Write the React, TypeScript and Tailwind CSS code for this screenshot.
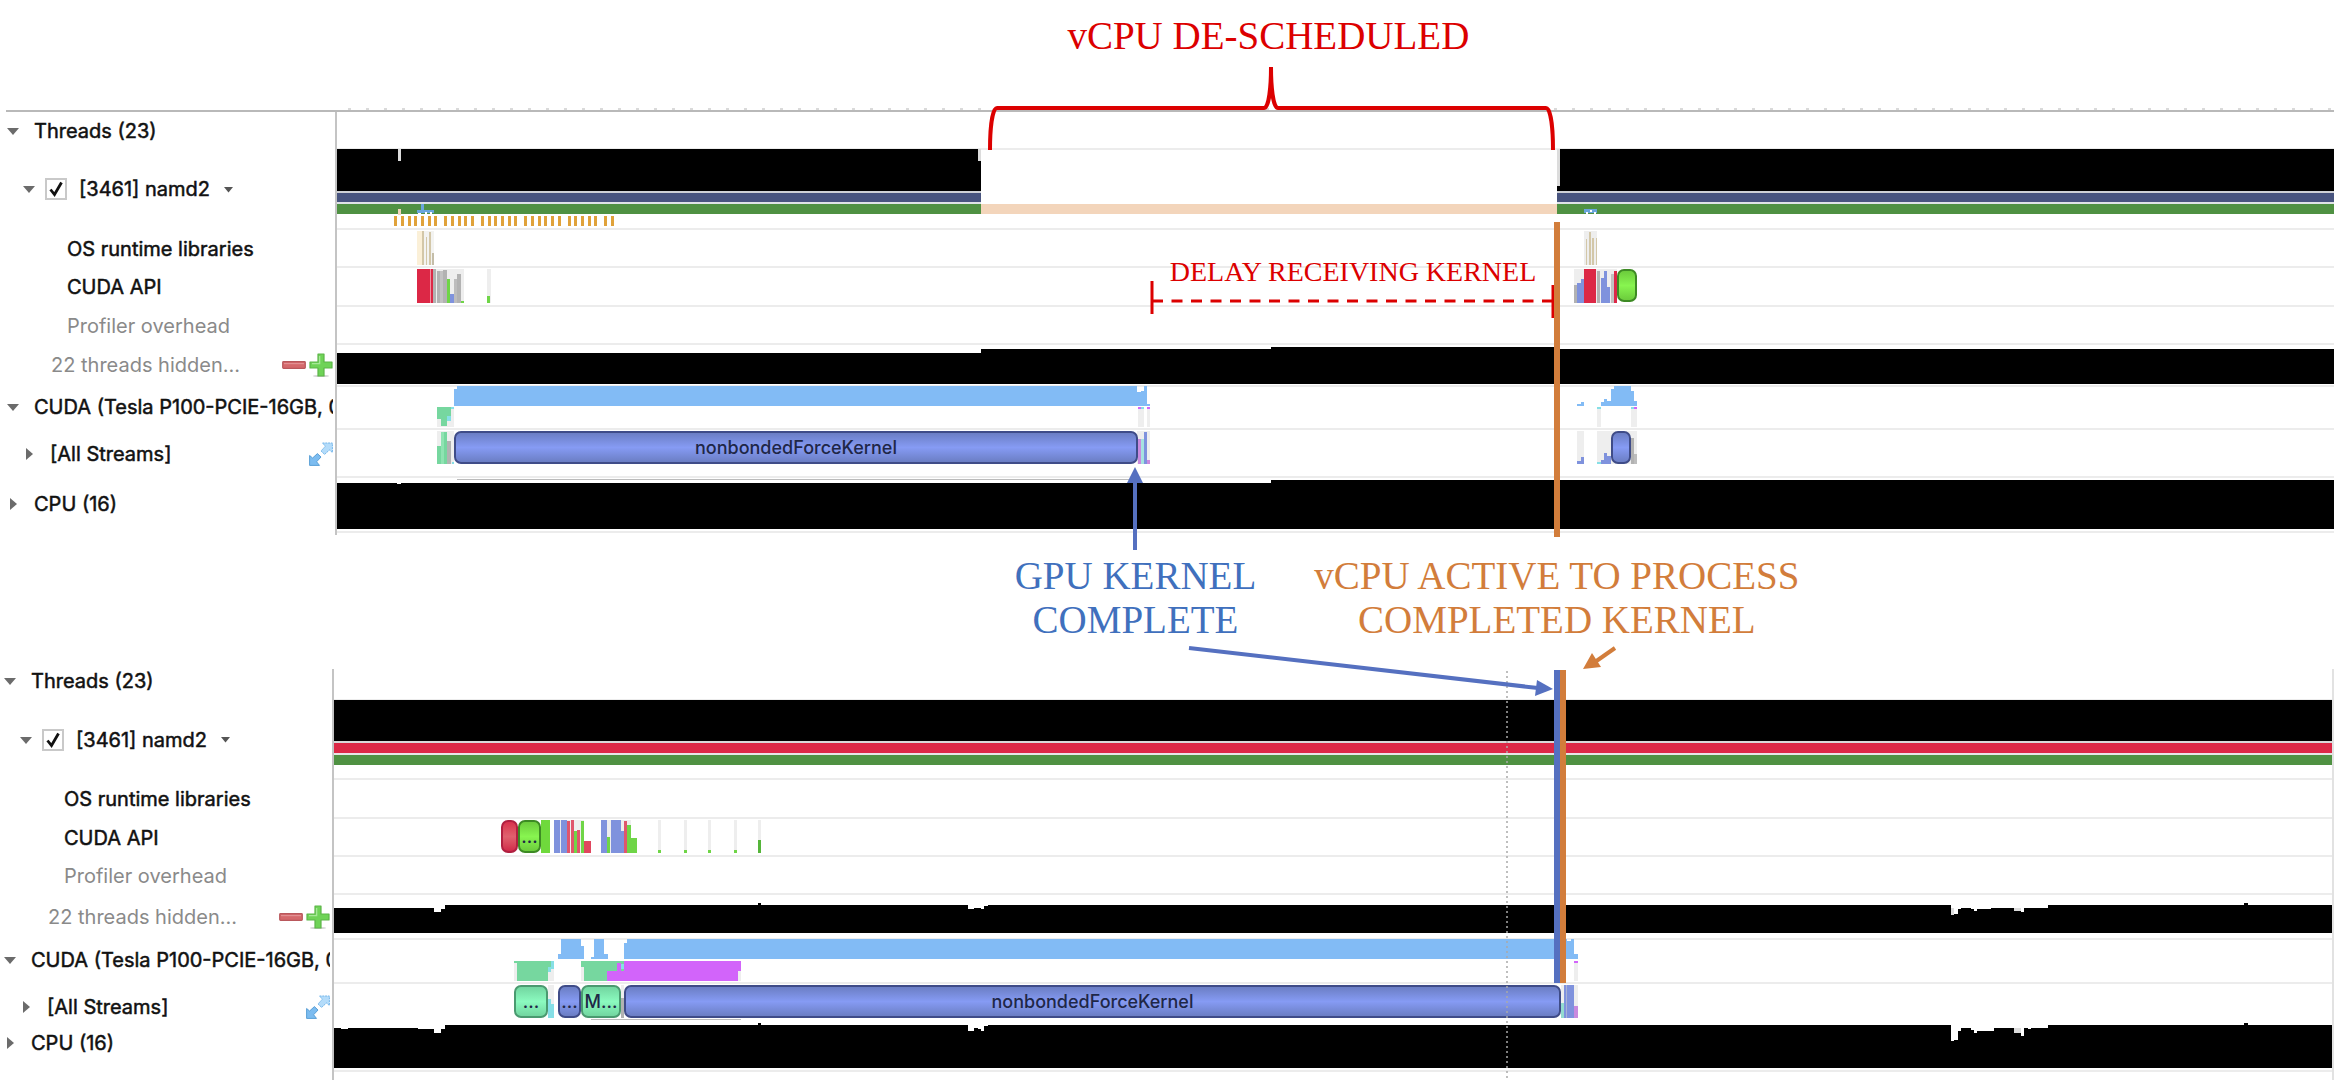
import React from "react";

type Bar = [x: number, y: number, w: number, h: number, color: string];
type Pill = { x: number; w: number; label?: string; tone: "indigo" | "green" | "mint" | "red" };
type Step = [x: number, top: number];

const SKY = "#82bbf5";
const MINT = "#76d79f";
const CYAN = "#86dfe6";
const VIOLET = "#d264fa";
const INDIGO = "#7f92dd";
const NAVY = "#48547f";
const FOREST = "#4f9142";
const RED = "#dc2846";
const LIME = "#6fd547";
const GRAY = "#b2b2b2";
const SHADE = "#eeeeee";
const PEACH = "#f3d5bb";
const SAND = "#d3c7a8";
const AMBER = "#e0a23a";

const TONES = {
  indigo: "border-[#3f4c88] bg-linear-to-b from-[#6b7ec4] via-[#869bf4] to-[#6b7ec4]",
  green: "border-[#3d8a24] bg-linear-to-b from-[#6ccc3c] via-[#88f550] to-[#6ccc3c]",
  mint: "border-[#4a9a70] bg-linear-to-b from-[#72d6a0] via-[#8bfabf] to-[#72d6a0]",
  red: "border-[#b02040] bg-linear-to-b from-[#d8304c] via-[#e0606e] to-[#d0284a]",
};

function skyline(steps: Step[], end: number, bottom: number) {
  let d = `M${steps[0][0]} ${bottom}`;
  steps.forEach(([x, top], i) => {
    const next = i + 1 < steps.length ? steps[i + 1][0] : end;
    d += `L${x} ${top}L${next} ${top}`;
  });
  return `${d}L${end} ${bottom}Z`;
}

type TrackProps = {
  x0: number;
  span: number;
  top: number;
  height: number;
  rule?: boolean;
  bars?: Bar[];
  sky?: string;
  pills?: Pill[];
  after?: Bar[];
  children?: React.ReactNode;
};

function Rects({ bars }: { bars: Bar[] }) {
  return (
    <>
      {bars.map(([x, y, w, h, c], i) => (
        <rect key={i} x={x} y={y} width={w} height={h} fill={c} />
      ))}
    </>
  );
}

function Track({ x0, span, top, height, rule = true, bars = [], sky, pills = [], after = [], children }: TrackProps) {
  return (
    <div className="relative min-w-0 flex-1 border-l-2 border-[#c4c4c4]">
      {rule && <div className="h-0.5 bg-[#ececec]" />}
      <svg
        className="absolute inset-0 h-full w-full"
        viewBox={`${x0} ${top} ${span} ${height}`}
        preserveAspectRatio="none"
        shapeRendering="crispEdges"
        aria-hidden="true"
      >
        <Rects bars={bars} />
        {sky && <path d={sky} fill="#000" />}
        <Rects bars={after} />
      </svg>
      {pills.map((p) => (
        <button
          key={p.x}
          type="button"
          aria-label={p.label ?? "kernel"}
          className={`absolute top-[3px] flex h-[33px] items-center justify-center overflow-hidden rounded-[7px] border-2 text-[18px] leading-none font-medium whitespace-nowrap text-[#1f2747] ${TONES[p.tone]}`}
          style={{ left: `${((p.x - x0) / span) * 100}%`, width: `${(p.w / span) * 100}%` }}
        >
          {p.label}
        </button>
      ))}
      {children}
    </div>
  );
}

function Caret({ open }: { open: boolean }) {
  return (
    <button type="button" aria-expanded={open} aria-label="Toggle row" className="flex size-3 shrink-0 items-center justify-center">
      <svg viewBox="0 0 12 12" className="size-3" aria-hidden="true">
        <path d={open ? "M0 3H12L6 10Z" : "M3 0V12L10 6Z"} fill="#6b6b6b" />
      </svg>
    </button>
  );
}

function HideShow() {
  return (
    <div className="ml-auto flex items-center gap-[3px]">
      <button type="button" aria-label="Show fewer threads" className="flex size-6 items-center">
        <svg viewBox="0 0 24 24" className="size-6" aria-hidden="true">
          <rect x="0.7" y="8.7" width="22.6" height="6.6" rx="0.8" fill="#d4696c" stroke="#b9585c" strokeWidth="1.2" />
          <path d="M2 10.6H22" stroke="#e29193" strokeWidth="1.2" />
        </svg>
      </button>
      <button type="button" aria-label="Show more threads" className="flex size-6 items-center">
        <svg viewBox="0 0 24 24" className="size-6" aria-hidden="true">
          <ellipse cx="12" cy="23" rx="8" ry="1" fill="#cfcfcf" />
          <path
            d="M9 1H15V9H23V15H15V23H9V15H1V9H9Z"
            fill="#6fd357"
            stroke="#5cb548"
            strokeWidth="1.2"
            strokeLinejoin="round"
          />
          <path d="M10.6 3V10.6H3" fill="none" stroke="#a6e897" strokeWidth="1.4" />
        </svg>
      </button>
    </div>
  );
}

function Expand() {
  return (
    <button type="button" aria-label="Expand streams" className="ml-auto flex size-6 items-center">
      <svg viewBox="0 0 24 24" className="size-6" aria-hidden="true">
        <path
          d="M13.5 1H23.4V10.5L20.4 8L15.6 12.4L12 9L16.4 4.2Z"
          fill="#b4dcfa"
          stroke="#74b6ea"
          strokeWidth="1"
          strokeDasharray="2 0.8"
        />
        <path d="M10.5 23.4H0.6V13.5L3.6 16L8.4 11.6L12 15L7.6 19.8Z" fill="#7cbcf0" stroke="#5a9fd6" strokeWidth="1" />
      </svg>
    </button>
  );
}

type RowProps = {
  h: string;
  label: React.ReactNode;
  indent: string;
  caret?: boolean;
  gap?: string;
  muted?: boolean;
  nudge?: string;
  end?: React.ReactNode;
  children: React.ReactNode;
};

function Row({ h, label, indent, caret, gap = "ml-[15px]", muted, nudge = "", end, children }: RowProps) {
  return (
    <div className={`flex ${h}`}>
      <div className={`flex w-[335px] shrink-0 items-center overflow-hidden pr-[2px] ${indent} ${nudge}`}>
        {caret !== undefined && <Caret open={caret} />}
        <div
          className={`min-w-0 overflow-hidden text-[20px] leading-6 whitespace-nowrap ${
            muted ? "text-[#8a8a8a]" : "text-[#111] [-webkit-text-stroke:0.5px_#111]"
          } ${caret === undefined ? "" : gap}`}
        >
          {label}
        </div>
        {end}
      </div>
      {children}
    </div>
  );
}

function ThreadLabel({ id }: { id: string }) {
  return (
    <span className="flex items-center">
      <span className="relative flex size-[22px] shrink-0">
        <input
          id={id}
          type="checkbox"
          defaultChecked
          className="peer size-[22px] appearance-none border-2 border-[#c9c9c9] bg-white"
        />
        <svg viewBox="0 0 22 22" className="pointer-events-none absolute inset-0 hidden size-[22px] peer-checked:block" aria-hidden="true">
          <path d="M5.5 11.5L9.5 16.5L16.5 4.5" fill="none" stroke="#111" strokeWidth="2.8" />
        </svg>
      </span>
      <label htmlFor={id} className="ml-3">
        [3461] namd2
      </label>
      <button type="button" aria-label="Thread options" className="ml-3.5 flex size-[9px] items-center">
        <svg viewBox="0 0 9 9" className="size-[9px]" aria-hidden="true">
          <path d="M0 2H9L4.5 7.5Z" fill="#555" />
        </svg>
      </button>
    </span>
  );
}

/* ---------- upper trace ---------- */

const A = { x0: 337, span: 1997 };

const ticks: Bar[] = [
  197, 217, 237, 257, 277, 297, 317, 347, 367, 387, 407, 427, 457, 477, 497, 517, 537, 557, 587, 607, 627, 647, 667, 687,
  717, 737, 757, 777, 797, 827, 847,
].map((c) => [Math.round(c / 3 + 328.5), 216, 3, 10, AMBER]);

const aThread: Bar[] = [
  [337, 149, 644, 42, "#000"],
  [398, 149, 3, 12, "#dcdcdc"],
  [978, 149, 3, 12, "#dcdcdc"],
  [1557, 149, 3, 37, "#dcdcdc"],
  [1557, 186, 3, 5, "#000"],
  [1560, 149, 774, 42, "#000"],
  [337, 191, 644, 2, "#cfd1d6"],
  [1557, 191, 777, 2, "#cfd1d6"],
  [337, 193, 644, 9, NAVY],
  [1557, 193, 777, 9, NAVY],
  [337, 202, 644, 2, "#dfe3e6"],
  [1557, 202, 777, 2, "#dfe3e6"],
  [337, 204, 644, 10, FOREST],
  [981, 204, 576, 10, PEACH],
  [1557, 204, 777, 10, FOREST],
  [398, 209, 3, 6, PEACH],
  [417, 210, 17, 3, "#6aa5dc"],
  [421, 204, 3, 6, "#6aa5dc"],
  [418, 213, 3, 2, "#fff"],
  [425, 212, 2, 2, "#fff"],
  [430, 212, 2, 2, "#fff"],
  [1584, 209, 13, 4, "#6aa5dc"],
  [1586, 212, 2, 2, "#fff"],
  [1590, 210, 2, 2, "#fff"],
  [1594, 212, 2, 2, "#fff"],
  ...ticks,
];

const aOs: Bar[] = [
  [417, 231, 5, 34, "#fbf0d8"],
  [422, 231, 12, 34, "#f3f3f1"],
  [422, 231, 2, 34, SAND],
  [426, 237, 1, 28, SAND],
  [429, 232, 2, 33, SAND],
  [432, 253, 2, 12, "#c4bda8"],
  [1584, 231, 13, 34, SHADE],
  [1586, 239, 1, 26, SAND],
  [1589, 232, 2, 33, SAND],
  [1592, 238, 2, 27, SAND],
  [1596, 238, 1, 27, SAND],
];

const aApi: Bar[] = [
  [417, 269, 16, 34, RED],
  [430, 269, 1, 34, "#f08fa0"],
  [433, 269, 31, 34, SHADE],
  [433, 269, 3, 34, GRAY],
  [437, 271, 3, 32, GRAY],
  [440, 271, 3, 32, "#c2c2c2"],
  [443, 270, 4, 33, GRAY],
  [447, 279, 3, 24, LIME],
  [450, 294, 4, 9, INDIGO],
  [454, 279, 3, 24, "#bdbdbd"],
  [457, 274, 4, 29, GRAY],
  [461, 301, 3, 2, LIME],
  [487, 269, 4, 34, SHADE],
  [487, 296, 3, 7, LIME],
  [1574, 269, 43, 34, SHADE],
  [1574, 285, 3, 18, GRAY],
  [1577, 283, 4, 20, INDIGO],
  [1581, 279, 3, 24, INDIGO],
  [1584, 269, 12, 34, RED],
  [1597, 271, 3, 32, GRAY],
  [1601, 278, 3, 25, INDIGO],
  [1604, 271, 3, 32, INDIGO],
  [1607, 287, 3, 16, INDIGO],
  [1611, 274, 3, 29, "#c2c2c2"],
  [1614, 271, 3, 32, RED],
];

const aGpu: Bar[] = [
  [454, 389, 3, 17, SKY],
  [457, 386, 680, 20, SKY],
  [1137, 392, 4, 14, SKY],
  [1141, 391, 3, 15, SKY],
  [1144, 386, 3, 20, SKY],
  [1147, 404, 3, 2, SKY],
  [437, 407, 17, 20, SHADE],
  [437, 407, 14, 12, MINT],
  [441, 419, 6, 7, MINT],
  [447, 416, 4, 5, CYAN],
  [451, 407, 3, 2, CYAN],
  [1138, 407, 6, 20, SHADE],
  [1147, 407, 3, 20, SHADE],
  [1138, 407, 3, 2, VIOLET],
  [1141, 407, 3, 2, CYAN],
  [1147, 407, 3, 2, VIOLET],
  [1577, 404, 4, 2, SKY],
  [1581, 402, 3, 4, SKY],
  [1601, 402, 3, 4, SKY],
  [1604, 399, 3, 7, SKY],
  [1607, 401, 4, 5, SKY],
  [1611, 389, 3, 17, SKY],
  [1614, 386, 17, 20, SKY],
  [1631, 391, 3, 15, SKY],
  [1634, 401, 3, 5, SKY],
  [1597, 407, 4, 20, SHADE],
  [1597, 407, 4, 2, CYAN],
  [1631, 407, 6, 20, SHADE],
  [1631, 407, 3, 2, CYAN],
  [1634, 407, 3, 2, VIOLET],
];

const aStreams: Bar[] = [
  [437, 431, 17, 33, SHADE],
  [437, 446, 4, 18, MINT],
  [441, 432, 3, 32, "#8fe3b2"],
  [444, 432, 3, 32, MINT],
  [447, 441, 4, 23, GRAY],
  [452, 462, 2, 2, CYAN],
  [1137, 431, 13, 33, SHADE],
  [1138, 439, 3, 25, "#c98ade"],
  [1141, 439, 3, 25, "#a6e3e0"],
  [1144, 432, 3, 32, INDIGO],
  [1147, 460, 3, 4, "#c98ade"],
  [1577, 431, 7, 33, SHADE],
  [1577, 461, 4, 3, INDIGO],
  [1581, 457, 3, 7, INDIGO],
  [1597, 431, 40, 33, SHADE],
  [1597, 462, 4, 2, CYAN],
  [1601, 460, 3, 4, INDIGO],
  [1604, 453, 3, 11, INDIGO],
  [1607, 456, 4, 8, INDIGO],
  [1631, 438, 3, 26, GRAY],
  [1634, 454, 3, 10, "#bdbdbd"],
];

const aHidden = skyline([[337, 353], [981, 349], [1271, 347], [1560, 349]], 2334, 384);
const aCpu = skyline([[337, 483], [397, 484], [401, 483], [981, 483], [1271, 480]], 2334, 529);

/* ---------- lower trace ---------- */

const B = { x0: 334, span: 1998 };

const bThread: Bar[] = [
  [334, 700, 1998, 41, "#000"],
  [334, 741, 1998, 2, "#d9d9d9"],
  [334, 743, 1998, 10, RED],
  [334, 753, 1998, 2, "#e6e6e6"],
  [334, 755, 1998, 10, FOREST],
];

const bApi: Bar[] = [
  [541, 820, 9, 33, "#6fd93c"],
  [554, 820, 37, 33, SHADE],
  [554, 820, 6, 33, INDIGO],
  [561, 820, 6, 33, INDIGO],
  [567, 821, 3, 32, "#e0566c"],
  [571, 820, 3, 33, "#e0566c"],
  [574, 831, 3, 22, LIME],
  [577, 830, 3, 23, "#e0566c"],
  [581, 821, 3, 32, LIME],
  [584, 820, 7, 33, "#fff"],
  [584, 841, 7, 12, "#e0465e"],
  [601, 820, 30, 33, SHADE],
  [601, 820, 6, 33, INDIGO],
  [607, 837, 3, 16, LIME],
  [611, 820, 10, 33, INDIGO],
  [621, 831, 3, 22, INDIGO],
  [624, 821, 3, 32, "#e0566c"],
  [627, 825, 4, 28, LIME],
  [631, 838, 6, 15, LIME],
  ...[658, 684, 708, 734, 758].flatMap((x): Bar[] => [
    [x, 820, 3, 33, SHADE],
    x === 758 ? [x, 840, 3, 13, "#55b53a"] : [x, 850, 3, 3, LIME],
  ]),
];

const bGpu: Bar[] = [
  [558, 954, 3, 5, SKY],
  [561, 939, 20, 20, SKY],
  [581, 946, 3, 13, SKY],
  [591, 957, 3, 2, SKY],
  [594, 939, 10, 20, SKY],
  [604, 954, 4, 5, SKY],
  [624, 943, 3, 16, SKY],
  [627, 939, 940, 20, SKY],
  [1567, 941, 4, 18, SKY],
  [1571, 939, 3, 20, SKY],
  [1574, 954, 4, 5, SKY],
  [514, 961, 40, 20, SHADE],
  [514, 961, 37, 2, MINT],
  [517, 961, 31, 20, MINT],
  [548, 961, 3, 6, MINT],
  [551, 961, 3, 8, CYAN],
  [548, 967, 3, 5, CYAN],
  [581, 961, 3, 20, SHADE],
  [581, 961, 3, 6, MINT],
  [584, 961, 24, 20, MINT],
  [608, 961, 16, 10, MINT],
  [607, 971, 17, 10, VIOLET],
  [617, 963, 4, 8, VIOLET],
  [621, 964, 3, 5, CYAN],
  [624, 961, 114, 20, VIOLET],
  [738, 961, 3, 20, SHADE],
  [738, 961, 3, 10, VIOLET],
  [1574, 961, 4, 20, SHADE],
  [1574, 961, 4, 2, VIOLET],
];

const bStreams: Bar[] = [
  [548, 985, 6, 33, SHADE],
  [548, 999, 3, 19, CYAN],
  [551, 1004, 3, 14, CYAN],
  [621, 985, 3, 33, SHADE],
  [621, 998, 3, 20, GRAY],
  [591, 1019, 150, 1, "#bbbbbb"],
  [1561, 985, 17, 33, SHADE],
  [1561, 1003, 3, 15, "#93dcd0"],
  [1564, 985, 10, 33, INDIGO],
  [1566, 985, 1, 33, "#a9b3d6"],
  [1574, 1006, 4, 12, "#c98ade"],
];

const bHidden = skyline(
  [
    [334, 908], [434, 912], [441, 909], [445, 905], [758, 903], [761, 905], [968, 909], [974, 908], [981, 909],
    [984, 906], [988, 905], [1951, 915], [1954, 914], [1958, 909], [1961, 908], [1971, 909], [1974, 911], [1977, 909],
    [1991, 908], [2014, 911], [2021, 912], [2024, 908], [2048, 905], [2244, 903], [2248, 905],
  ],
  2332,
  933,
);

const bCpu = skyline(
  [
    [334, 1028], [341, 1029], [348, 1028], [418, 1029], [434, 1033], [441, 1029], [445, 1025], [758, 1023], [761, 1025],
    [968, 1031], [974, 1028], [978, 1029], [981, 1031], [984, 1026], [988, 1025], [1951, 1041], [1954, 1040],
    [1958, 1031], [1961, 1028], [1971, 1030], [1974, 1033], [1977, 1031], [1994, 1028], [2014, 1033], [2021, 1036],
    [2024, 1028], [2028, 1029], [2031, 1028], [2048, 1025], [2244, 1023], [2248, 1025],
  ],
  2332,
  1068,
);

function UpperTrace() {
  return (
    <section aria-label="Delayed trace" className="pr-1">
      <div className="ml-1.5 h-0.5 bg-[#b9b9b9]" />
      <Row h="h-9" indent="pl-[7px]" caret={true} label="Threads (23)" nudge="pt-0.5">
        <Track {...A} top={112} height={36} rule={false} />
      </Row>
      <Row h="h-20" indent="pl-[23px]" caret={true} gap="ml-2.5" label={<ThreadLabel id="thread-a" />} nudge="pt-0.5">
        <Track {...A} top={148} height={80} bars={aThread} />
      </Row>
      <Row h="h-[38px]" indent="pl-[67px]" label="OS runtime libraries" nudge="pt-1">
        <Track {...A} top={228} height={38} bars={aOs} />
      </Row>
      <Row h="h-[39px]" indent="pl-[67px]" label="CUDA API" nudge="pt-0.5">
        <Track {...A} top={266} height={39} bars={aApi} pills={[{ x: 1617, w: 20, tone: "green" }]}>
          <p className="absolute -top-2 left-[41.7%] font-['Liberation_Serif',serif] text-[28px] leading-7 whitespace-nowrap text-[#dc0000]">
            DELAY RECEIVING KERNEL
          </p>
        </Track>
      </Row>
      <Row h="h-[38px]" indent="pl-[67px]" label="Profiler overhead" muted nudge="pt-1">
        <Track {...A} top={305} height={38} />
      </Row>
      <Row h="h-[42px]" indent="pl-[51px]" label="22 threads hidden..." muted end={<HideShow />} nudge="pt-0.5">
        <Track {...A} top={343} height={42} sky={aHidden} />
      </Row>
      <Row h="h-[43px]" indent="pl-[7px]" caret={true} label="CUDA (Tesla P100-PCIE-16GB, 0">
        <Track {...A} top={385} height={43} bars={aGpu} />
      </Row>
      <Row h="h-12" indent="pl-[23px]" caret={false} label="[All Streams]" end={<Expand />} nudge="pt-1">
        <Track
          {...A}
          top={428}
          height={48}
          bars={aStreams}
          pills={[
            { x: 454, w: 684, label: "nonbondedForceKernel", tone: "indigo" },
            { x: 1611, w: 20, tone: "indigo" },
          ]}
        />
      </Row>
      <Row h="h-[55px]" indent="pl-[7px]" caret={false} label="CPU (16)">
        <Track {...A} top={476} height={55} sky={aCpu} bars={[[457, 479, 680, 1, "#bbbbbb"]]} />
      </Row>
      <div className="flex h-1">
        <div className="w-[335px] shrink-0" />
        <Track {...A} top={531} height={4} />
      </div>
    </section>
  );
}

function LowerTrace() {
  return (
    <section aria-label="Undelayed trace" className="-ml-[3px] pr-[4px]">
      <div className="border-r-2 border-[#e2e2e2]">
        <Row h="h-[30px]" indent="pl-[7px]" caret={true} label="Threads (23)" nudge="pb-1.5">
          <Track {...B} top={669} height={30} rule={false} />
        </Row>
        <Row h="h-[79px]" indent="pl-[23px]" caret={true} gap="ml-2.5" label={<ThreadLabel id="thread-b" />} nudge="pt-0.5">
          <Track {...B} top={699} height={79} bars={bThread} />
        </Row>
        <Row h="h-[39px]" indent="pl-[67px]" label="OS runtime libraries" nudge="pt-0.5">
          <Track {...B} top={778} height={39} />
        </Row>
        <Row h="h-[38px]" indent="pl-[67px]" label="CUDA API" nudge="pt-1">
          <Track
            {...B}
            top={817}
            height={38}
            bars={bApi}
            pills={[
              { x: 501, w: 17, tone: "red" },
              { x: 518, w: 23, label: "...", tone: "green" },
            ]}
          />
        </Row>
        <Row h="h-[38px]" indent="pl-[67px]" label="Profiler overhead" muted nudge="pt-1">
          <Track {...B} top={855} height={38} />
        </Row>
        <Row h="h-[45px]" indent="pl-[51px]" label="22 threads hidden..." muted end={<HideShow />} nudge="pt-0.5">
          <Track {...B} top={893} height={45} sky={bHidden} after={[[1951, 908, 3, 7, "#dcdcdc"], [2014, 908, 7, 3, "#dcdcdc"]]} />
        </Row>
        <Row h="h-11" indent="pl-[7px]" caret={true} label="CUDA (Tesla P100-PCIE-16GB, 0">
          <Track {...B} top={938} height={44} bars={bGpu} />
        </Row>
        <Row h="h-[40px]" indent="pl-[23px]" caret={false} label="[All Streams]" end={<Expand />} nudge="pt-2.5">
          <Track
            {...B}
            top={982}
            height={40}
            bars={bStreams}
            pills={[
              { x: 514, w: 34, label: "...", tone: "mint" },
              { x: 558, w: 23, label: "...", tone: "indigo" },
              { x: 581, w: 40, label: "M...", tone: "mint" },
              { x: 624, w: 937, label: "nonbondedForceKernel", tone: "indigo" },
            ]}
          />
        </Row>
        <Row h="h-12" indent="pl-[7px]" caret={false} label="CPU (16)" nudge="pb-1.5">
          <Track {...B} top={1022} height={48} rule={false} sky={bCpu} after={[[2014, 1028, 7, 5, "#dcdcdc"]]} />
        </Row>
        <div className="flex h-2.5">
          <div className="w-[335px] shrink-0" />
          <Track {...B} top={1070} height={10} />
        </div>
      </div>
    </section>
  );
}

function Annotations() {
  return (
    <svg
      className="pointer-events-none absolute inset-0 h-full w-full"
      viewBox="0 0 2338 1080"
      preserveAspectRatio="none"
      aria-hidden="true"
    >
      <path d="M348 109H2334" stroke="#b5b5b5" strokeWidth="1" strokeDasharray="3 15" />
      <g fill="none" stroke="#dc0000" strokeWidth="4">
        <path d="M990 150C990 130 992 108 997 108H1264C1269 108 1271 86 1271 67C1271 86 1273 108 1278 108H1546C1551 108 1553 130 1553 150" />
        <path d="M1152 281V314M1553 285V318" strokeWidth="3" />
        <path d="M1152 301H1552" strokeWidth="3" strokeDasharray="11 8.5" />
      </g>
      <path d="M1507 671V1080" stroke="#a9a9a9" strokeWidth="1.5" strokeDasharray="2 3" />
      <g fill="#d27d3b">
        <rect x="1554" y="222" width="6" height="315" />
        <rect x="1560" y="670" width="6" height="313" />
        <path d="M1583 669L1592 653L1601 667Z" />
      </g>
      <path d="M1615 648L1595 662" stroke="#d27d3b" strokeWidth="4" />
      <g fill="#5570c0">
        <rect x="1554" y="670" width="6" height="313" />
        <path d="M1135 467L1143 483H1127Z" />
        <path d="M1553 689L1537 680L1535 696Z" />
      </g>
      <path d="M1135 550V480M1189 648L1538 688" fill="none" stroke="#5570c0" strokeWidth="4" />
    </svg>
  );
}

export default function App() {
  return (
    <main className="relative bg-white font-['Inter',sans-serif]">
      <header className="h-[110px] pt-3.5 pl-[8.5%] text-center">
        <h1 className="font-['Liberation_Serif',serif] text-[39px] leading-[44px] text-[#dc0000]">vCPU DE-SCHEDULED</h1>
      </header>
      <UpperTrace />
      <div className="flex h-[134px] gap-[58px] pt-[19px] pl-[43.4%] text-center font-['Liberation_Serif',serif] text-[39px] leading-[44px] whitespace-nowrap">
        <p className="text-[#4070bd]">
          GPU KERNEL
          <br />
          COMPLETE
        </p>
        <p className="text-[#d27d3b]">
          vCPU ACTIVE TO PROCESS
          <br />
          COMPLETED KERNEL
        </p>
      </div>
      <LowerTrace />
      <Annotations />
    </main>
  );
}
